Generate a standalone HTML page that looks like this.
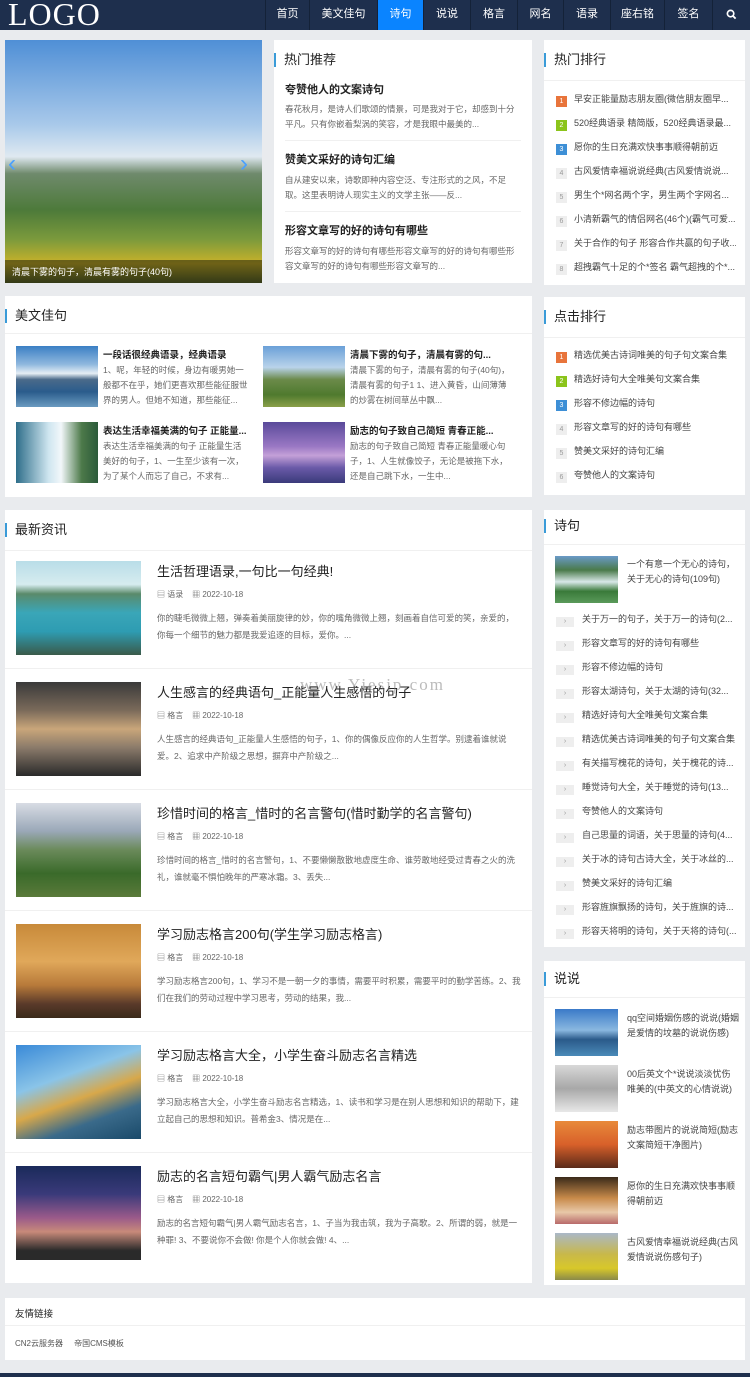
<!DOCTYPE html>
<html><head><meta charset="utf-8"><style>
*{margin:0;padding:0;box-sizing:border-box}
body{width:750px;height:1377px;background:#e9ebee;font-family:"Liberation Sans","Noto Sans CJK SC",sans-serif;color:#333;position:relative;overflow:hidden}
.a{position:absolute}
.box{position:absolute;background:#fff}
.hd{position:absolute;left:0;top:0;width:750px;height:30px;background:#1e2f4d}
.nav{position:absolute;top:0;height:30px;line-height:28px;font-size:11px;color:#fff;text-align:center;border-left:1px solid #142238}
.ttl{position:absolute;left:10px;font-size:13px;color:#222;border-left:2px solid #3a9bd8;padding-left:8px;line-height:14px}
.line{position:absolute;left:0;right:0;height:1px;background:#f0f0f0}
.rk{position:absolute;left:12px;font-size:9px;color:#444;white-space:nowrap;overflow:hidden;width:180px;line-height:12px}
.rk i{display:inline-block;width:11px;height:11px;line-height:11px;text-align:center;font-style:normal;font-size:7px;color:#999;background:#eee;margin-right:7px;vertical-align:-1px}
.sj{position:absolute;left:12px;font-size:9px;color:#444;white-space:nowrap;overflow:hidden;width:182px;line-height:12px}
.sj i{display:inline-block;width:18px;height:10px;line-height:10px;text-align:center;font-style:normal;font-size:7px;color:#999;background:#eee;margin-right:8px;vertical-align:-1px}
.nt{position:absolute;left:157px;font-size:13px;color:#222}
.nm{position:absolute;left:157px;font-size:8px;color:#666}
.nd{position:absolute;left:157px;width:365px;font-size:8.5px;color:#666;line-height:17px}
.img{position:absolute}
</style></head><body>
<div class="hd"></div>
<div class="a" style="left:8px;top:-4px;font-family:'Liberation Serif',serif;font-size:32px;color:#fff;letter-spacing:1px">LOGO</div>
<div class="nav" style="left:265px;width:44px">首页</div>
<div class="nav" style="left:309px;width:68px">美文佳句</div>
<div class="nav" style="left:377px;width:46px;background:#0a84ff">诗句</div>
<div class="nav" style="left:423px;width:47px">说说</div>
<div class="nav" style="left:470px;width:47px">格言</div>
<div class="nav" style="left:517px;width:46px">网名</div>
<div class="nav" style="left:563px;width:47px">语录</div>
<div class="nav" style="left:610px;width:54px">座右铭</div>
<div class="nav" style="left:664px;width:48px">签名</div>
<div class="nav" style="left:712px;width:38px"><svg width="11" height="11" viewBox="0 0 12 12" style="margin-top:9px"><circle cx="5" cy="5" r="3.5" fill="none" stroke="#fff" stroke-width="1.8"/><path d="M7.5 7.5 L10.5 10.5" stroke="#fff" stroke-width="2"/></svg></div>

<!-- slider -->
<div class="img" style="left:5px;top:40px;width:257px;height:243px;background:linear-gradient(180deg,#4f8fd6 0%,#a9c9ea 35%,#dfe9f1 48%,#6f8a6c 55%,#4d7a3a 70%,#7b9a3c 82%,#c9b22a 92%,#5d6a2a 100%)"></div>
<div class="a" style="left:5px;top:260px;width:257px;height:23px;background:rgba(0,0,0,.45)"></div>
<div class="a" style="left:12px;top:265px;font-size:9px;color:#fff">清晨下雾的句子，清晨有雾的句子(40句)</div>
<div class="a" style="left:8px;top:150px;color:#4aa0ff;font-size:24px">&#8249;</div>
<div class="a" style="left:240px;top:150px;color:#4aa0ff;font-size:24px">&#8250;</div>

<!-- hot recommend -->
<div class="box" style="left:274px;top:40px;width:258px;height:243px">
<div class="ttl" style="top:13px;left:0">热门推荐</div>
<div class="a" style="left:11px;top:41px;font-size:11px;font-weight:bold;color:#222">夸赞他人的文案诗句</div>
<div class="a" style="left:11px;top:62px;width:235px;font-size:8.5px;color:#666;line-height:15px">春花秋月，是诗人们歌颂的情景，可是我对于它，却感到十分平凡。只有你嵌着梨涡的笑容，才是我眼中最美的...</div>
<div class="line" style="top:100px;left:11px;right:11px"></div>
<div class="a" style="left:11px;top:111px;font-size:11px;font-weight:bold;color:#222">赞美文采好的诗句汇编</div>
<div class="a" style="left:11px;top:133px;width:235px;font-size:8.5px;color:#666;line-height:15px">自从建安以来，诗歌即种内容空泛、专注形式的之风，不足取。这里表明诗人现实主义的文学主张——反...</div>
<div class="line" style="top:171px;left:11px;right:11px"></div>
<div class="a" style="left:11px;top:182px;font-size:11px;font-weight:bold;color:#222">形容文章写的好的诗句有哪些</div>
<div class="a" style="left:11px;top:204px;width:235px;font-size:8.5px;color:#666;line-height:15px">形容文章写的好的诗句有哪些形容文章写的好的诗句有哪些形容文章写的好的诗句有哪些形容文章写的...</div>
</div>

<!-- 热门排行 -->
<div class="box" style="left:544px;top:40px;width:201px;height:245px">
<div class="ttl" style="top:13px;left:0">热门排行</div>
<div class="line" style="top:40px"></div>
<div class="rk" style="top:53px"><i style="background:#e8743b;color:#fff">1</i>早安正能量励志朋友圈(微信朋友圈早...</div>
<div class="rk" style="top:77px"><i style="background:#8bc41b;color:#fff">2</i>520经典语录 精简版，520经典语录最...</div>
<div class="rk" style="top:101px"><i style="background:#3d8fd6;color:#fff">3</i>愿你的生日充满欢快事事顺得朝前迈</div>
<div class="rk" style="top:125px"><i>4</i>古风爱情幸福说说经典(古风爱情说说...</div>
<div class="rk" style="top:149px"><i>5</i>男生个*网名两个字，男生两个字网名...</div>
<div class="rk" style="top:173px"><i>6</i>小清新霸气的情侣网名(46个)(霸气可爱...</div>
<div class="rk" style="top:197px"><i>7</i>关于合作的句子 形容合作共赢的句子收...</div>
<div class="rk" style="top:221px"><i>8</i>超拽霸气十足的个*签名 霸气超拽的个*...</div>
</div>

<!-- 美文佳句 -->
<div class="box" style="left:5px;top:296px;width:527px;height:201px">
<div class="ttl" style="top:13px;left:0">美文佳句</div>
<div class="line" style="top:37px"></div>
<div class="img" style="left:11px;top:50px;width:82px;height:61px;background:linear-gradient(180deg,#3a7fc4 0%,#8fb8de 30%,#e6eef5 45%,#4a6a8a 55%,#2a5c8c 75%,#6a9ac0 100%)"></div>
<div class="a" style="left:98px;top:51px;font-size:9.5px;font-weight:bold;color:#222">一段话很经典语录，经典语录</div>
<div class="a" style="left:98px;top:67px;width:145px;font-size:8.5px;color:#666;line-height:15px">1、呢，年轻的时候，身边有暖男她一般都不在乎，她们更喜欢那些能征服世界的男人。但她不知道，那些能征...</div>
<div class="img" style="left:258px;top:50px;width:82px;height:61px;background:linear-gradient(180deg,#6aa0d8 0%,#b9d3ea 35%,#6b8a4a 55%,#4f7a2e 80%,#8aa04a 100%)"></div>
<div class="a" style="left:345px;top:51px;font-size:9.5px;font-weight:bold;color:#222">清晨下雾的句子，清晨有雾的句...</div>
<div class="a" style="left:345px;top:67px;width:160px;font-size:8.5px;color:#666;line-height:15px">清晨下雾的句子，清晨有雾的句子(40句)，清晨有雾的句子1 1、进入黄昏，山间薄薄的炒雾在树间草丛中飘...</div>
<div class="img" style="left:11px;top:126px;width:82px;height:61px;background:linear-gradient(90deg,#2e6e8a 0%,#cfe6f0 40%,#f2f7fa 55%,#4d7a4a 80%,#2b5a3a 100%)"></div>
<div class="a" style="left:98px;top:127px;font-size:9.5px;font-weight:bold;color:#222">表达生活幸福美满的句子 正能量...</div>
<div class="a" style="left:98px;top:143px;width:145px;font-size:8.5px;color:#666;line-height:15px">表达生活幸福美满的句子 正能量生活美好的句子，1、一生至少该有一次，为了某个人而忘了自己，不求有...</div>
<div class="img" style="left:258px;top:126px;width:82px;height:61px;background:linear-gradient(180deg,#5a4a9a 0%,#9a78c4 40%,#c4a0d8 55%,#6a5aa8 75%,#3a3a7a 100%)"></div>
<div class="a" style="left:345px;top:127px;font-size:9.5px;font-weight:bold;color:#222">励志的句子致自己简短 青春正能...</div>
<div class="a" style="left:345px;top:143px;width:160px;font-size:8.5px;color:#666;line-height:15px">励志的句子致自己简短 青春正能量暖心句子，1、人生就像饺子，无论是被拖下水，还是自己跳下水，一生中...</div>
</div>

<!-- 点击排行 -->
<div class="box" style="left:544px;top:297px;width:201px;height:198px">
<div class="ttl" style="top:13px;left:0">点击排行</div>
<div class="line" style="top:40px"></div>
<div class="rk" style="top:52px"><i style="background:#e8743b;color:#fff">1</i>精选优美古诗词唯美的句子句文案合集</div>
<div class="rk" style="top:76px"><i style="background:#8bc41b;color:#fff">2</i>精选好诗句大全唯美句文案合集</div>
<div class="rk" style="top:100px"><i style="background:#3d8fd6;color:#fff">3</i>形容不修边幅的诗句</div>
<div class="rk" style="top:124px"><i>4</i>形容文章写的好的诗句有哪些</div>
<div class="rk" style="top:148px"><i>5</i>赞美文采好的诗句汇编</div>
<div class="rk" style="top:172px"><i>6</i>夸赞他人的文案诗句</div>
</div>

<!-- 最新资讯 -->
<div class="box" style="left:5px;top:510px;width:527px;height:773px">
<div class="ttl" style="top:13px;left:0">最新资讯</div>
<div class="line" style="top:40px"></div>
</div>
<div class="line" style="left:5px;width:527px;top:668px"></div>
<div class="line" style="left:5px;width:527px;top:789px"></div>
<div class="line" style="left:5px;width:527px;top:910px"></div>
<div class="line" style="left:5px;width:527px;top:1031px"></div>
<div class="line" style="left:5px;width:527px;top:1152px"></div>

<div class="img" style="left:16px;top:561px;width:125px;height:94px;background:linear-gradient(180deg,#b9dde8 0%,#d6ecef 25%,#5a8a6a 35%,#3aa6b8 55%,#2e9cb2 75%,#3a5a4a 100%)"></div>
<div class="nt" style="top:561px">生活哲理语录,一句比一句经典!</div>
<div class="nm" style="top:589px">▤ 语录 &nbsp;&nbsp; ▦ 2022-10-18</div>
<div class="nd" style="top:610px">你的睫毛微微上翘，弹奏着美丽旋律的妙，你的嘴角微微上翘，刻画着自信可爱的笑，亲爱的，你每一个细节的魅力都是我爱追逐的目标，爱你。...</div>

<div class="img" style="left:16px;top:682px;width:125px;height:94px;background:linear-gradient(180deg,#3a3a3a 0%,#7a6a5a 30%,#c9a67a 50%,#8a7a6a 70%,#2a2a2a 100%)"></div>
<div class="nt" style="top:682px">人生感言的经典语句_正能量人生感悟的句子</div>
<div class="nm" style="top:710px">▤ 格言 &nbsp;&nbsp; ▦ 2022-10-18</div>
<div class="nd" style="top:731px">人生感言的经典语句_正能量人生感悟的句子，1、你的偶像反应你的人生哲学。别逮着谁就说爱。2、追求中产阶级之思想，摒弃中产阶级之...</div>

<div class="img" style="left:16px;top:803px;width:125px;height:94px;background:linear-gradient(180deg,#d8dce4 0%,#9aa8b8 30%,#6a8a5a 50%,#3a6a2a 75%,#5a7a3a 100%)"></div>
<div class="nt" style="top:803px">珍惜时间的格言_惜时的名言警句(惜时勤学的名言警句)</div>
<div class="nm" style="top:831px">▤ 格言 &nbsp;&nbsp; ▦ 2022-10-18</div>
<div class="nd" style="top:852px">珍惜时间的格言_惜时的名言警句，1、不要懒懒散散地虚度生命、谁劳敢地经受过青春之火的洗礼，谁就毫不惧怕晚年的严寒冰霜。3、丢失...</div>

<div class="img" style="left:16px;top:924px;width:125px;height:94px;background:linear-gradient(180deg,#c88a3a 0%,#e0a85a 40%,#b87a3a 65%,#5a3a2a 85%,#3a2a1a 100%)"></div>
<div class="nt" style="top:924px">学习励志格言200句(学生学习励志格言)</div>
<div class="nm" style="top:952px">▤ 格言 &nbsp;&nbsp; ▦ 2022-10-18</div>
<div class="nd" style="top:973px">学习励志格言200句，1、学习不是一朝一夕的事情，需要平时积累，需要平时的勤学苦练。2、我们在我们的劳动过程中学习思考，劳动的结果，我...</div>

<div class="img" style="left:16px;top:1045px;width:125px;height:94px;background:linear-gradient(160deg,#3a8ad8 0%,#8ac4e8 35%,#d8a84a 55%,#3a6a8a 75%,#1a4a6a 100%)"></div>
<div class="nt" style="top:1045px">学习励志格言大全，小学生奋斗励志名言精选</div>
<div class="nm" style="top:1073px">▤ 格言 &nbsp;&nbsp; ▦ 2022-10-18</div>
<div class="nd" style="top:1094px">学习励志格言大全，小学生奋斗励志名言精选，1、读书和学习是在别人思想和知识的帮助下，建立起自己的思想和知识。普希金3、情况是在...</div>

<div class="img" style="left:16px;top:1166px;width:125px;height:94px;background:linear-gradient(180deg,#1a2a5a 0%,#3a3a7a 30%,#9a5a8a 55%,#c88a7a 70%,#2a2a2a 90%)"></div>
<div class="nt" style="top:1166px">励志的名言短句霸气|男人霸气励志名言</div>
<div class="nm" style="top:1194px">▤ 格言 &nbsp;&nbsp; ▦ 2022-10-18</div>
<div class="nd" style="top:1215px">励志的名言短句霸气|男人霸气励志名言，1、子当为我击筑，我为子高歌。2、所谓的弱，就是一种罪! 3、不要说你不会做! 你是个人你就会做! 4、...</div>

<div class="a" style="left:300px;top:675px;font-family:'Liberation Serif',serif;font-size:17px;color:rgba(120,120,120,.5);letter-spacing:2px">www.Yiesip.com</div>

<!-- 诗句 -->
<div class="box" style="left:544px;top:510px;width:201px;height:437px">
<div class="ttl" style="top:9px;left:0">诗句</div>
<div class="line" style="top:34px"></div>
<div class="img" style="left:11px;top:46px;width:63px;height:47px;background:linear-gradient(180deg,#6a9ac8 0%,#4a7a4a 30%,#d8e8e8 55%,#3a7a3a 75%,#5a9a5a 100%)"></div>
<div class="a" style="left:83px;top:47px;width:110px;font-size:9px;color:#444;line-height:15px">一个有意一个无心的诗句，关于无心的诗句(109句)</div>
<div class="sj" style="top:103px"><i>›</i>关于万一的句子，关于万一的诗句(2...</div>
<div class="sj" style="top:127px"><i>›</i>形容文章写的好的诗句有哪些</div>
<div class="sj" style="top:151px"><i>›</i>形容不修边幅的诗句</div>
<div class="sj" style="top:175px"><i>›</i>形容太湖诗句，关于太湖的诗句(32...</div>
<div class="sj" style="top:199px"><i>›</i>精选好诗句大全唯美句文案合集</div>
<div class="sj" style="top:223px"><i>›</i>精选优美古诗词唯美的句子句文案合集</div>
<div class="sj" style="top:247px"><i>›</i>有关描写槐花的诗句，关于槐花的诗...</div>
<div class="sj" style="top:271px"><i>›</i>睡觉诗句大全，关于睡觉的诗句(13...</div>
<div class="sj" style="top:295px"><i>›</i>夸赞他人的文案诗句</div>
<div class="sj" style="top:319px"><i>›</i>自己思量的词语，关于思量的诗句(4...</div>
<div class="sj" style="top:343px"><i>›</i>关于冰的诗句古诗大全，关于冰丝的...</div>
<div class="sj" style="top:367px"><i>›</i>赞美文采好的诗句汇编</div>
<div class="sj" style="top:391px"><i>›</i>形容旌旗飘扬的诗句，关于旌旗的诗...</div>
<div class="sj" style="top:415px"><i>›</i>形容天将明的诗句，关于天将的诗句(...</div>
</div>

<!-- 说说 -->
<div class="box" style="left:544px;top:961px;width:201px;height:324px">
<div class="ttl" style="top:11px;left:0">说说</div>
<div class="line" style="top:36px"></div>
<div class="img" style="left:11px;top:48px;width:63px;height:47px;background:linear-gradient(180deg,#3a7ac8 0%,#8ab8e0 45%,#2a5a8a 65%,#4a8ab8 100%)"></div>
<div class="a" style="left:83px;top:50px;width:112px;font-size:9px;color:#444;line-height:15px">qq空间婚姻伤感的说说(婚姻是爱情的坟墓的说说伤感)</div>
<div class="img" style="left:11px;top:104px;width:63px;height:47px;background:linear-gradient(180deg,#d8d8d8 0%,#a8a8a8 50%,#e8e8e8 100%)"></div>
<div class="a" style="left:83px;top:106px;width:112px;font-size:9px;color:#444;line-height:15px">00后英文个*说说淡淡忧伤唯美的(中英文的心情说说)</div>
<div class="img" style="left:11px;top:160px;width:63px;height:47px;background:linear-gradient(180deg,#e88a3a 0%,#d8602a 50%,#5a2a1a 100%)"></div>
<div class="a" style="left:83px;top:162px;width:112px;font-size:9px;color:#444;line-height:15px">励志带图片的说说简短(励志文案简短干净图片)</div>
<div class="img" style="left:11px;top:216px;width:63px;height:47px;background:linear-gradient(180deg,#3a2a1a 0%,#c88a4a 45%,#e8c8a8 75%,#b86a6a 100%)"></div>
<div class="a" style="left:83px;top:218px;width:112px;font-size:9px;color:#444;line-height:15px">愿你的生日充满欢快事事顺得朝前迈</div>
<div class="img" style="left:11px;top:272px;width:63px;height:47px;background:linear-gradient(180deg,#aab8c8 0%,#c8b84a 45%,#d8c82a 75%,#8a8a4a 100%)"></div>
<div class="a" style="left:83px;top:274px;width:112px;font-size:9px;color:#444;line-height:15px">古风爱情幸福说说经典(古风爱情说说伤感句子)</div>
</div>

<!-- friend links -->
<div class="box" style="left:5px;top:1298px;width:740px;height:62px">
<div class="a" style="left:10px;top:8px;font-size:9.5px;color:#222">友情链接</div>
<div class="line" style="top:27px"></div>
<div class="a" style="left:10px;top:40px;font-size:8px;color:#555">CN2云服务器 &nbsp;&nbsp;&nbsp; 帝国CMS模板</div>
</div>
<div class="a" style="left:0;top:1373px;width:750px;height:4px;background:#1e2f4d"></div>
</body></html>
